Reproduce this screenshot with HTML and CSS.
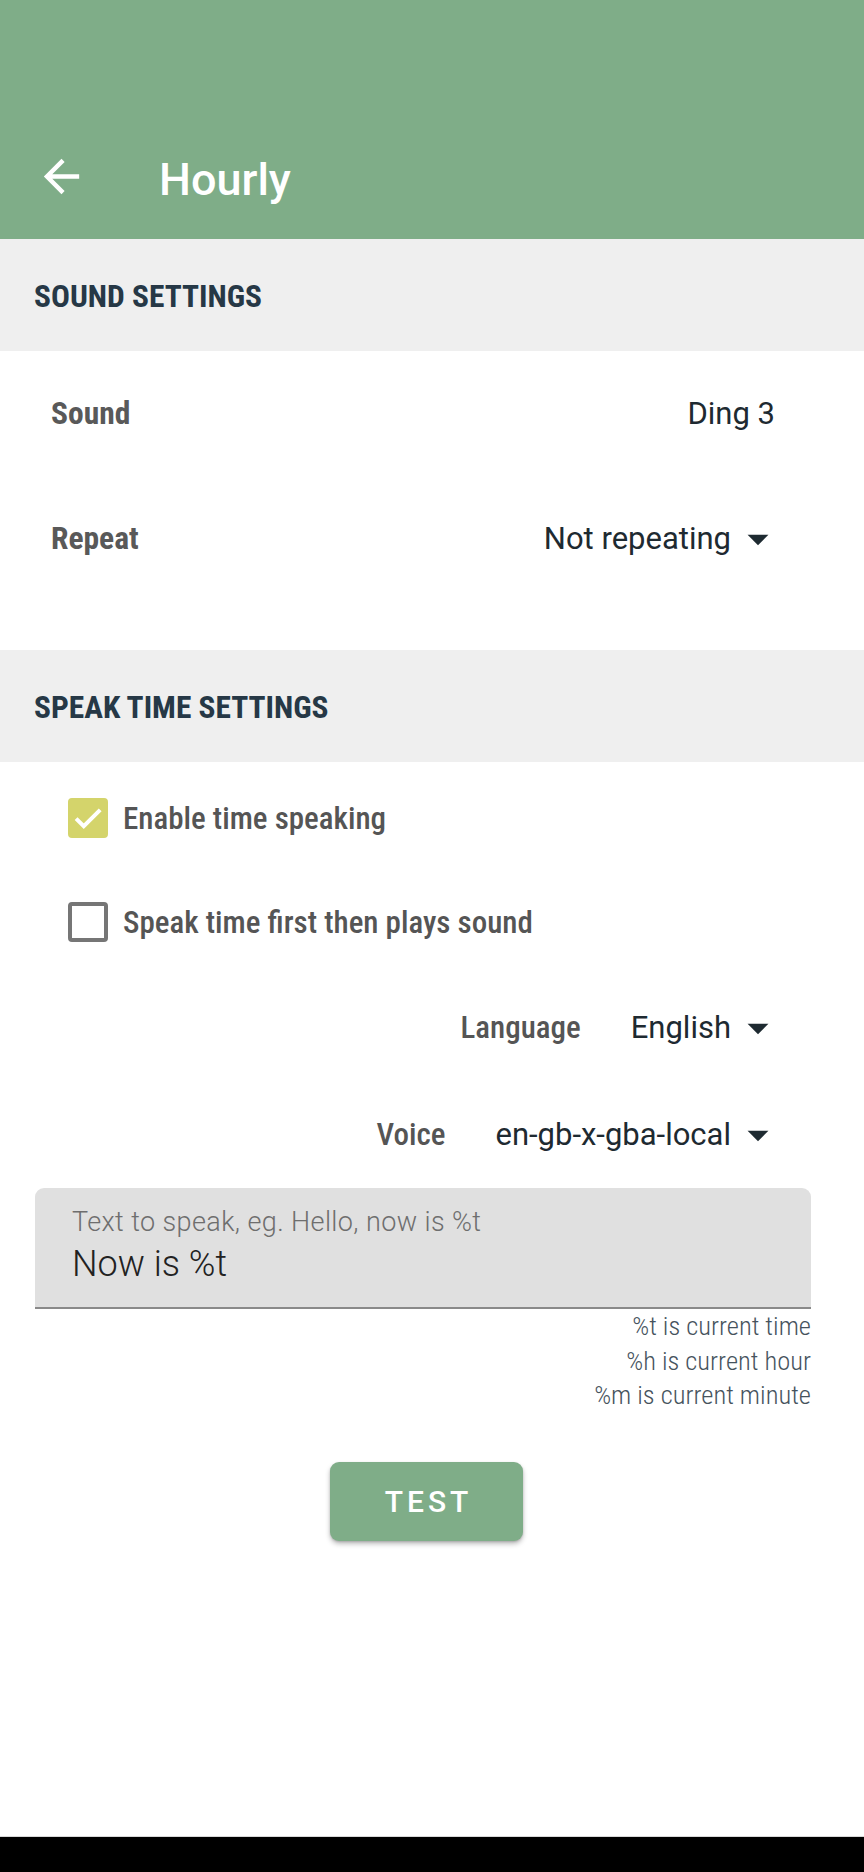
FILE: index.html
```html
<!DOCTYPE html>
<html lang="en">
<head>
<meta charset="utf-8">
<title>Hourly</title>
<link rel="stylesheet" href="styles.css">
</head>
<body>
<div class="screen">
  <header class="appbar">
    <div class="toolbar">
      <svg class="back" viewBox="0 0 24 24" aria-hidden="true"><path d="M20 11H7.83l5.59-5.59L12 4l-8 8 8 8 1.41-1.41L7.83 13H20v-2z"/></svg>
      <h1 class="title">Hourly</h1>
    </div>
  </header>

  <main class="content">
    <div class="section-head">SOUND SETTINGS</div>
    <div class="sound-body">
      <div class="row">
        <span class="label">Sound</span>
        <span class="value plain">Ding 3</span>
      </div>
      <div class="row">
        <span class="label">Repeat</span>
        <span class="spinner">Not repeating<svg class="drop" viewBox="0 0 24 24"><path d="M7 10l5 5 5-5z"/></svg></span>
      </div>
    </div>

    <div class="section-head">SPEAK TIME SETTINGS</div>
    <div class="speak-body">
      <div class="check-row">
        <span class="box checked"><svg viewBox="0 0 24 24"><path d="M3.6 12.4l5.4 5.4L20.6 6.2" fill="none" stroke="#fff" stroke-width="2.8"/></svg></span>
        <span class="check-label">Enable time speaking</span>
      </div>
      <div class="check-row">
        <span class="box"></span>
        <span class="check-label">Speak time first then plays sound</span>
      </div>

      <div class="select-row">
        <span class="select-label">Language</span>
        <span class="spinner">English<svg class="drop" viewBox="0 0 24 24"><path d="M7 10l5 5 5-5z"/></svg></span>
      </div>
      <div class="select-row">
        <span class="select-label">Voice</span>
        <span class="spinner">en-gb-x-gba-local<svg class="drop" viewBox="0 0 24 24"><path d="M7 10l5 5 5-5z"/></svg></span>
      </div>

      <div class="field-wrap">
        <div class="field">
          <div class="field-label">Text to speak, eg. Hello, now is %t</div>
          <div class="field-value">Now is %t</div>
        </div>
        <div class="helper">
          <div>%t is current time</div>
          <div>%h is current hour</div>
          <div>%m is current minute</div>
        </div>
        <div class="btn-row">
          <button class="test-btn">TEST</button>
        </div>
      </div>
    </div>
  </main>

  <div class="navbar"></div>
</div>
</body>
</html>
```

FILE: styles.css
```css
* { box-sizing: border-box; }

html, body {
  margin: 0;
  padding: 0;
  background: #ffffff;
}

body {
  font-family: "Roboto", "Noto Sans", sans-serif;
}

.screen {
  width: 864px;
  height: 1872px;
  display: flex;
  flex-direction: column;
  overflow: hidden;
}

.appbar {
  height: 239px;
  background: #7fad88;
  display: flex;
  flex-direction: column;
  justify-content: flex-end;
  flex: none;
}

.toolbar {
  height: 126px;
  display: flex;
  align-items: center;
}

.back {
  width: 53px;
  height: 53px;
  margin-left: 35px;
  fill: #ffffff;
  flex: none;
}

.title {
  margin: 0 0 0 71px;
  color: #ffffff;
  font-family: "Roboto", sans-serif;
  font-weight: 500;
  font-size: 45px;
  line-height: 1;
  padding-top: 6px;
}

.content {
  flex: 1;
  display: flex;
  flex-direction: column;
}

.section-head {
  height: 112px;
  background: #efefef;
  display: flex;
  align-items: center;
  padding-left: 34px;
  padding-top: 3px;
  font-family: "Roboto Condensed", "Roboto", sans-serif;
  font-stretch: condensed;
  font-weight: 700;
  font-size: 31.4px;
  color: #263846;
  flex: none;
}

.sound-body {
  padding-bottom: 49px;
}

.row {
  height: 125px;
  display: flex;
  align-items: center;
  justify-content: space-between;
  padding-left: 51px;
  padding-right: 81px;
}

.label {
  font-family: "Roboto Condensed", "Roboto", sans-serif;
  font-stretch: condensed;
  font-weight: 700;
  font-size: 31.5px;
  color: #595959;
}

.value, .spinner {
  font-family: "Roboto", sans-serif;
  font-size: 31px;
  color: #1e2a31;
}

.value.plain {
  margin-right: 8px;
}

.spinner {
  display: flex;
  align-items: center;
}

.drop {
  width: 50px;
  height: 50px;
  margin-left: 2px;
  fill: #1e2a31;
  flex: none;
}

.speak-body {
  padding-top: 4px;
}

.check-row {
  height: 104px;
  display: flex;
  align-items: center;
  padding-left: 68px;
}

.box {
  width: 40px;
  height: 40px;
  border: 4.5px solid #767676;
  border-radius: 4px;
  flex: none;
  display: flex;
  align-items: center;
  justify-content: center;
}

.box.checked {
  background: #d4d46b;
  border-color: #d4d46b;
  padding: 0;
}

.box svg {
  width: 34px;
  height: 34px;
  flex: none;
}

.check-label {
  margin-left: 15px;
  font-family: "Roboto Condensed", "Roboto", sans-serif;
  font-stretch: condensed;
  font-weight: 500;
  font-size: 31px;
  color: #555555;
}

.select-row {
  height: 107px;
  display: flex;
  align-items: center;
  justify-content: flex-end;
  gap: 50px;
  padding-right: 81px;
}

.select-label {
  font-family: "Roboto Condensed", "Roboto", sans-serif;
  font-stretch: condensed;
  font-weight: 500;
  font-size: 31px;
  color: #555555;
}

.field-wrap {
  margin: 0 53px 0 35px;
  display: flex;
  flex-direction: column;
}

.field {
  height: 121px;
  background: #e0e0e0;
  border-radius: 9px 9px 0 0;
  border-bottom: 2px solid #8a8a8a;
  padding: 17px 0 0 37px;
}

.field-label {
  font-weight: 300;
  font-size: 27px;
  letter-spacing: 0.4px;
  color: #6e6e6e;
  line-height: 35px;
}

.field-value {
  font-weight: 300;
  font-size: 36px;
  color: #222222;
  line-height: 48px;
}

.helper {
  text-align: right;
  font-family: "Roboto Condensed", "Roboto", sans-serif;
  font-stretch: condensed;
  font-weight: 300;
  font-size: 26.5px;
  line-height: 34.5px;
  color: #46535d;
  padding-top: 0;
}

.btn-row {
  display: flex;
  justify-content: center;
  padding-top: 49px;
  padding-left: 7px;
}

.test-btn {
  width: 193px;
  height: 79px;
  border: none;
  border-radius: 9px;
  background: #7fad88;
  color: #ffffff;
  font-family: "Roboto", sans-serif;
  font-weight: 500;
  font-size: 30px;
  letter-spacing: 4px;
  padding: 0 0 0 4px;
  box-shadow: 0 3px 5px rgba(0, 0, 0, 0.25), 0 1px 2px rgba(0, 0, 0, 0.15);
}

.navbar {
  height: 36px;
  background: #000000;
  border-top: 1px solid #d8d8d8;
  flex: none;
}
```
